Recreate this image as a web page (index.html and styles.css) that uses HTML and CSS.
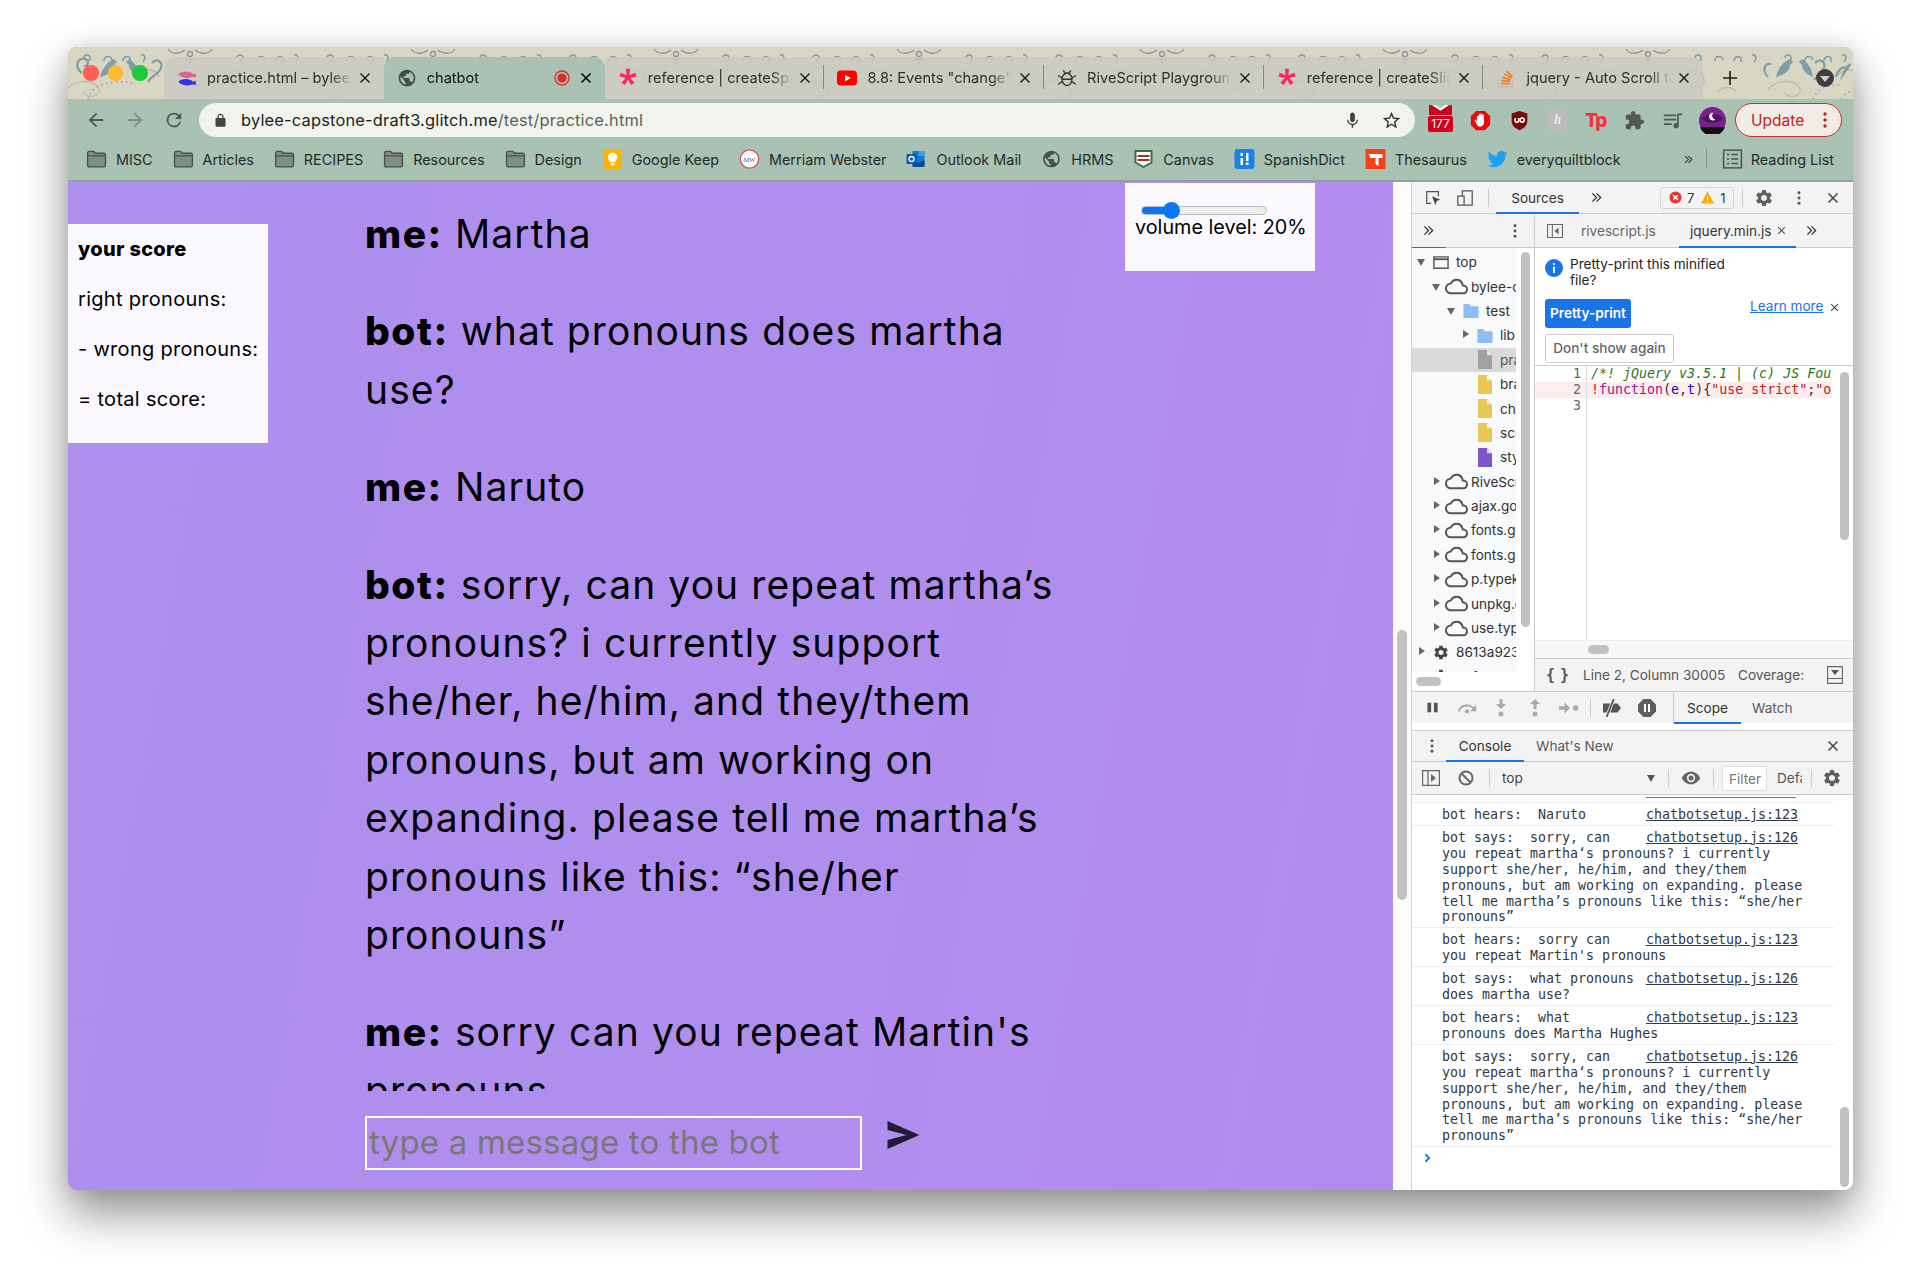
FILE: index.html
```html
<!DOCTYPE html>
<html lang="en">
<head>
<meta charset="utf-8">
<title>chatbot</title>
<link rel="stylesheet" href="styles.css">
</head>
<body>
<svg class="defs" width="0" height="0" aria-hidden="true">
  <defs>
    <symbol id="i-folder" viewBox="0 0 20 18"><path d="M1.5 3.5c0-1 .6-1.7 1.6-1.7h4.2l1.7 1.7h8c1 0 1.5.6 1.5 1.5v10c0 1-.6 1.5-1.5 1.5H3c-1 0-1.5-.6-1.5-1.5z" fill="#7f8f84" stroke="#4a4f4b" stroke-width="1.3"/><path d="M2 6h16" stroke="#4a4f4b" stroke-width="1.1"/></symbol>
    <symbol id="i-globe" viewBox="0 0 24 24"><path fill="currentColor" d="M12 2C6.48 2 2 6.48 2 12s4.48 10 10 10 10-4.48 10-10S17.52 2 12 2zm-1 17.93c-3.95-.49-7-3.85-7-7.93 0-.62.08-1.21.21-1.79L9 15v1c0 1.1.9 2 2 2v1.93zm6.9-2.54c-.26-.81-1-1.39-1.9-1.39h-1v-3c0-.55-.45-1-1-1H8v-2h2c.55 0 1-.45 1-1V7h2c1.1 0 2-.9 2-2v-.41c2.93 1.19 5 4.06 5 7.41 0 2.08-.8 3.97-2.1 5.39z"/></symbol>
    <symbol id="i-x" viewBox="0 0 12 12"><path d="M1.5 1.5l9 9M10.5 1.5l-9 9" fill="none" stroke="currentColor" stroke-width="1.5"/></symbol>
    <symbol id="i-star" viewBox="0 0 24 24"><path fill="#f7275f" d="M9.6 1h4.8l-.7 7.6 7-3 1.5 4.6-7.4 1.7 5 5.8-3.9 2.8L12 14l-3.9 6.5-3.9-2.8 5-5.8-7.4-1.7 1.5-4.6 7 3z"/></symbol>
    <symbol id="i-gear" viewBox="0 0 24 24"><path fill="currentColor" d="M19.14 12.94c.04-.3.06-.61.06-.94 0-.32-.02-.64-.07-.94l2.03-1.58a.49.49 0 0 0 .12-.61l-1.92-3.32a.488.488 0 0 0-.59-.22l-2.39.96c-.5-.38-1.03-.7-1.62-.94l-.36-2.54a.484.484 0 0 0-.48-.41h-3.84c-.24 0-.43.17-.47.41l-.36 2.54c-.59.24-1.13.57-1.62.94l-2.39-.96c-.22-.08-.47 0-.59.22L2.74 8.87c-.12.21-.08.47.12.61l2.03 1.58c-.05.3-.09.63-.09.94s.02.64.07.94l-2.03 1.58a.49.49 0 0 0-.12.61l1.92 3.32c.12.22.37.29.59.22l2.39-.96c.5.38 1.03.7 1.62.94l.36 2.54c.05.24.24.41.48.41h3.84c.24 0 .44-.17.47-.41l.36-2.54c.59-.24 1.13-.56 1.62-.94l2.39.96c.22.08.47 0 .59-.22l1.92-3.32c.12-.22.07-.47-.12-.61l-2.01-1.58zM12 15.6c-1.98 0-3.6-1.62-3.6-3.6s1.62-3.6 3.6-3.6 3.6 1.62 3.6 3.6-1.62 3.6-3.6 3.6z"/></symbol>
    <symbol id="i-cloud" viewBox="0 0 24 24"><path fill="#555" d="M19.35 10.04A7.49 7.49 0 0 0 12 4C9.11 4 6.6 5.64 5.35 8.04A5.994 5.994 0 0 0 0 14c0 3.31 2.69 6 6 6h13c2.76 0 5-2.24 5-5 0-2.64-2.05-4.78-4.65-4.96zM19 18H6c-2.21 0-4-1.79-4-4 0-2.05 1.53-3.76 3.56-3.97l1.07-.11.5-.95A5.469 5.469 0 0 1 12 6c2.62 0 4.88 1.86 5.39 4.43l.3 1.5 1.53.11A2.98 2.98 0 0 1 22 15c0 1.65-1.35 3-3 3z"/></symbol>
    <symbol id="i-dir" viewBox="0 0 18 18"><path fill="#8ebcf3" d="M1 2h6l2 2.5h8V17H1z"/></symbol>
    <symbol id="i-doc" viewBox="0 0 16 20" preserveAspectRatio="none"><path fill="currentColor" d="M1 1h9l5 5v13H1z"/><path fill="#fff" d="M10 1l5 5h-5z" opacity=".75"/></symbol>
    <symbol id="i-more" viewBox="0 0 4 16"><circle cx="2" cy="2" r="1.7" fill="currentColor"/><circle cx="2" cy="8" r="1.7" fill="currentColor"/><circle cx="2" cy="14" r="1.7" fill="currentColor"/></symbol>
    <symbol id="i-chev" viewBox="0 0 12 12"><path d="M1.5 1.5L6 6l-4.5 4.5M6 1.5L10.5 6 6 10.5" fill="none" stroke="#333" stroke-width="1.4"/></symbol>
  </defs>
</svg>

<div class="window">
  <header class="tabstrip">
    <svg class="wallpaper" width="1785" height="52" aria-hidden="true">
      <defs>
        <pattern id="wp" x="122" width="243" height="52" patternUnits="userSpaceOnUse">
          <g fill="none" stroke="#7e9aa6" stroke-width="1.5">
            <path d="M47 11a3 3 0 1 1 3 3"/><path d="M67 14a4 4 0 0 1 8-1"/><path d="M86 14a4 4 0 0 1 7-3v4"/><path d="M104 8a3 3 0 0 1 4 3l-2 4"/><path d="M137 11a3 3 0 1 1 3 3"/><path d="M157 14a4 4 0 0 1 8-1"/><path d="M176 14a4 4 0 0 1 7-3v4"/><path d="M194 8a3 3 0 0 1 4 3l-2 4"/>
          </g>
          <g fill="none" stroke="#9a8ea6" stroke-width="1.3">
            <circle cx="0" cy="7" r="2.5"/><circle cx="243" cy="7" r="2.5"/><path d="M-22 2c4 6 12 5 17 1M22 2c-4 6-12 5-17 1M221 2c4 6 12 5 17 1"/><path d="M-5 12h10M0 10v7M238 12h10M243 10v7"/>
          </g>
          <g fill="none" stroke="#b3b2a2" stroke-width="1.3" opacity=".8">
            <path d="M30 30c10-10 24-8 26 2s-12 12-14 4"/><path d="M120 42c12-12 30-8 32 0s-12 10-16 3"/><path d="M190 28c8-8 20-6 22 2"/><path d="M70 45c5-6 14-6 18 0"/>
          </g>
        </pattern>
      </defs>
      <rect width="1785" height="52" fill="#d9d7c3"/>
      <rect width="1785" height="52" fill="url(#wp)"/>
      <g fill="none" stroke="#7f9ea8" stroke-width="2.2">
        <path d="M14 26c-8-6-5-16 3-14 5 2 3 8-1 7"/><path d="M84 16c6-6 12 0 8 7-3 5-9 6-12 12"/>
        <path d="M1700 30c-6-6-4-14 3-13"/><path d="M1747 16c6-6 12 0 8 7-3 5-6 6-9 10"/><path d="M1768 30c2-8 8-12 12-8"/>
      </g>
      <g fill="#7f9ea8">
        <path d="M32 30c2-9 8-16 14-18l3 3-3 3c0 6-6 10-14 12z"/><path d="M72 30c-1-8-5-15-11-18l-3 3 3 3c0 5 4 9 11 12z"/>
        <path d="M1708 30c2-9 8-16 14-18l3 3-3 3c0 6-6 10-14 12z"/><path d="M1745 30c-1-8-5-15-11-18l-3 3 3 3c0 5 4 9 11 12z"/><path d="M1772 34c2-9 6-16 10-18l1 2"/>
      </g>
      <g fill="none" stroke="#8fa9ae" stroke-width="1.7" stroke-dasharray="1.5 3.5">
        <path d="M20 52c4-14 22-20 44-16"/><path d="M1745 52c4-10 14-14 26-14"/><path d="M1773 52c4-6 8-8 12-8"/>
      </g>
    </svg>
    <div class="lights"><i class="light red"></i><i class="light amber"></i><i class="light green"></i></div>
    <div class="tabs">
      <div class="tab">
        <svg class="fav fav-lg" viewBox="0 0 16 16"><path fill="#e0609a" d="M1 5c3-3 9-3 12 0l2-1v4l-2-1c-3 1.5-9 1.5-12-2z"/><path fill="#3333ee" d="M1 11c3-3 9-3 12 0l2-1v4l-2-1c-3 1.5-9 1.5-12-2z"/></svg>
        <span class="tab-title">practice.html – bylee-capstone</span>
        <svg class="tab-x"><use href="#i-x"/></svg>
      </div>
      <div class="tab active">
        <svg class="fav fav-dark fav-lg"><use href="#i-globe"/></svg>
        <span class="tab-title">chatbot</span>
        <svg class="rec" viewBox="0 0 16 16"><circle cx="8" cy="8" r="7" fill="none" stroke="#d93025" stroke-width="1.3"/><circle cx="8" cy="8" r="4.6" fill="#d93025"/></svg>
        <svg class="tab-x"><use href="#i-x"/></svg>
      </div>
      <div class="tab sep">
        <svg class="fav fav-lg"><use href="#i-star"/></svg>
        <span class="tab-title">reference | createSpan</span>
        <svg class="tab-x"><use href="#i-x"/></svg>
      </div>
      <div class="tab sep">
        <svg class="fav fav-lg" viewBox="0 0 16 16"><rect y="2" width="16" height="12" rx="3" fill="#f00"/><path d="M6.5 5.5v5L11 8z" fill="#fff"/></svg>
        <span class="tab-title">8.8: Events "change" and</span>
        <svg class="tab-x"><use href="#i-x"/></svg>
      </div>
      <div class="tab sep">
        <svg class="fav fav-lg" viewBox="0 0 16 16"><g fill="none" stroke="#333" stroke-width="1.1"><ellipse cx="8" cy="9" rx="4" ry="5"/><path d="M5 2l2 3M11 2L9 5M1 6l3 2M15 6l-3 2M1 13l3-2M15 13l-3-2M4 9h8"/></g></svg>
        <span class="tab-title">RiveScript Playground</span>
        <svg class="tab-x"><use href="#i-x"/></svg>
      </div>
      <div class="tab sep">
        <svg class="fav fav-lg"><use href="#i-star"/></svg>
        <span class="tab-title">reference | createSlider</span>
        <svg class="tab-x"><use href="#i-x"/></svg>
      </div>
      <div class="tab">
        <svg class="fav fav-lg" viewBox="0 0 16 16"><path fill="none" stroke="#bbb" stroke-width="1.3" d="M2 10v5h11v-5"/><path fill="none" stroke="#f48024" stroke-width="1.5" d="M4 12.5h7M4.3 10l7 .7M5 7.500l6.800 1.800M6.500 4.800l6 3.200M8.500 2.500l4.500 4.500"/></svg>
        <span class="tab-title">jquery - Auto Scroll to bottom</span>
        <svg class="tab-x"><use href="#i-x"/></svg>
      </div>
    </div>
    <svg class="newtab" viewBox="0 0 16 16"><path d="M8 1v14M1 8h14" stroke="#222" stroke-width="1.7"/></svg>
    <span class="tabmenu"><i class="tabmenu-arrow"></i></span>
  </header>

  <div class="toolbar">
    <svg class="nav-ico" viewBox="0 0 24 24"><path fill="#4f5a54" d="M20 11H7.830l5.590-5.590L12 4l-8 8 8 8 1.410-1.410L7.830 13H20v-2z"/></svg>
    <svg class="nav-ico" viewBox="0 0 24 24"><path fill="#7f8f85" d="M4 11h12.170l-5.590-5.590L12 4l8 8-8 8-1.410-1.410L16.170 13H4v-2z"/></svg>
    <svg class="nav-ico" viewBox="0 0 24 24"><path fill="#4f5a54" d="M17.650 6.350A7.960 7.960 0 0 0 12 4a8 8 0 1 0 7.750 10h-2.080A6 6 0 1 1 12 6c1.660 0 3.140.690 4.220 1.780L13 11h7V4l-2.350 2.350z"/></svg>
    <div class="omnibox">
      <svg class="omni-lock" viewBox="0 0 24 24"><path fill="#444" d="M18 8h-1V6c0-2.760-2.240-5-5-5S7 3.240 7 6v2H6c-1.100 0-2 .900-2 2v10c0 1.100.900 2 2 2h12c1.100 0 2-.900 2-2V10c0-1.100-.900-2-2-2zM9 6c0-1.660 1.340-3 3-3s3 1.340 3 3v2H9V6z"/></svg>
      <span class="url">bylee-capstone-draft3.glitch.me<span class="url-path">/test/practice.html</span></span>
      <svg class="omni-ico" viewBox="0 0 24 24"><path fill="#444" d="M12 14c1.660 0 3-1.340 3-3V5c0-1.660-1.340-3-3-3S9 3.340 9 5v6c0 1.660 1.340 3 3 3zm5.300-3c0 3-2.540 5.100-5.300 5.100S6.700 14 6.700 11H5c0 3.410 2.720 6.230 6 6.720V21h2v-3.280c3.280-.480 6-3.300 6-6.720h-1.700z"/></svg>
      <svg class="omni-ico star" viewBox="0 0 24 24"><path fill="#333" d="M22 9.240l-7.190-.620L12 2 9.190 8.630 2 9.240l5.460 4.730L5.820 21 12 17.270 18.180 21l-1.630-7.030L22 9.240zM12 15.400l-3.760 2.270 1-4.280-3.320-2.880 4.380-.380L12 6.100l1.710 4.040 4.380.380-3.320 2.880 1 4.280L12 15.400z"/></svg>
    </div>
    <div class="exts">
      <div class="ext ext-mail">
        <svg class="mail-m" viewBox="0 0 24 14" preserveAspectRatio="none"><path fill="#d0021b" d="M0 0h6l6 6 6-6h6v14H0z"/><path fill="#fff" d="M3 0l9 8 9-8h-4l-5 4.500L7 0z"/></svg>
        <span class="mail-count">177</span>
      </div>
      <svg class="ext" viewBox="0 0 24 24"><path fill="#ea0a0a" d="M7 1h10l6 6v10l-6 6H7l-6-6V7z"/><path fill="#fff" d="M8 12V7.500a1 1 0 0 1 2 0V5.500a1 1 0 0 1 2 0v-.500a1 1 0 0 1 2 0v1a1 1 0 0 1 2 0v8c0 3-2 5-4.500 5-2 0-3-1-4-3l-2-3.500c-.500-1 1-2 2-.500z"/></svg>
      <svg class="ext" viewBox="0 0 24 24"><path fill="#7a0a0a" d="M12 1l9 3v8c0 6-4 9-9 11-5-2-9-5-9-11V4z"/><path fill="none" stroke="#fff" stroke-width="1.800" d="M7 9v3a2 2 0 0 0 4 0V9"/><circle cx="15" cy="11.500" r="2.400" fill="none" stroke="#fff" stroke-width="1.800"/></svg>
      <span class="ext ext-h">h</span>
      <span class="ext ext-tp">Tp</span>
      <svg class="ext" viewBox="0 0 24 24"><path fill="#4f5a54" d="M20.500 11H19V7c0-1.100-.900-2-2-2h-4V3.500C13 2.120 11.880 1 10.500 1S8 2.120 8 3.500V5H4c-1.100 0-1.990.900-1.990 2v3.800H3.500c1.490 0 2.700 1.210 2.700 2.700s-1.210 2.700-2.700 2.700H2V20c0 1.100.900 2 2 2h3.800v-1.500c0-1.490 1.210-2.700 2.700-2.700 1.490 0 2.700 1.210 2.700 2.700V22H17c1.100 0 2-.900 2-2v-4h1.500c1.380 0 2.500-1.120 2.500-2.500S21.880 11 20.500 11z"/></svg>
      <svg class="ext" viewBox="0 0 24 24"><path fill="#4f5a54" d="M1 5h14v2H1zM1 10h14v2H1zM1 15h9v2H1zM16 4h6v2h-4v12a3 3 0 1 1-2-2.800z"/></svg>
      <svg class="ext ext-avatar" viewBox="0 0 28 28"><circle cx="14" cy="14" r="14" fill="#7b1f8f"/><path d="M1 21h26a14 14 0 0 1-26 0z" fill="#111"/><path d="M3 12c5-6 17-6 22 0-5 6-17 6-22 0z" fill="#4a1260"/><path d="M15 6a4 4 0 1 0 2 7 4 4 0 0 1-2-7z" fill="#fff"/></svg>
      <div class="update"><span>Update</span><svg class="update-more"><use href="#i-more"/></svg></div>
    </div>
  </div>

  <nav class="bookmarks">
    <a class="bm"><svg class="bm-ico"><use href="#i-folder"/></svg>MISC</a>
    <a class="bm"><svg class="bm-ico"><use href="#i-folder"/></svg>Articles</a>
    <a class="bm"><svg class="bm-ico"><use href="#i-folder"/></svg>RECIPES</a>
    <a class="bm"><svg class="bm-ico"><use href="#i-folder"/></svg>Resources</a>
    <a class="bm"><svg class="bm-ico"><use href="#i-folder"/></svg>Design</a>
    <a class="bm"><svg class="bm-ico" viewBox="0 0 18 20"><rect width="18" height="20" rx="3" fill="#fbb400"/><circle cx="9" cy="8.500" r="4.800" fill="#fff"/><rect x="7" y="14" width="4" height="2.500" fill="#fff"/></svg>Google Keep</a>
    <a class="bm"><svg class="bm-ico" viewBox="0 0 20 20"><circle cx="10" cy="10" r="9.200" fill="#fff" stroke="#d4504f" stroke-width="1.300"/><text x="10" y="12.500" class="mw">MW</text></svg>Merriam Webster</a>
    <a class="bm"><svg class="bm-ico" viewBox="0 0 20 20"><path fill="#0f78d4" d="M6 2h12v14H6z"/><path fill="#28a8ea" d="M12 2h6v5h-6z"/><path fill="#064a8c" d="M6 11l6 3 6-3v7H6z"/><rect y="5" width="10" height="10" rx="1" fill="#0a5ea8"/><circle cx="5" cy="10" r="2.500" fill="none" stroke="#fff" stroke-width="1.300"/></svg>Outlook Mail</a>
    <a class="bm"><svg class="bm-ico bm-globe"><use href="#i-globe"/></svg>HRMS</a>
    <a class="bm"><svg class="bm-ico" viewBox="0 0 20 20"><path fill="#3d6b4e" d="M1 1h18v13l-9 5-9-5z"/><path fill="#fff" d="M3 3h14v10l-7 4-7-4z"/><path fill="#a32e2e" d="M4 6h12v2H4zM4 10h12v2H4z"/></svg>Canvas</a>
    <a class="bm"><svg class="bm-ico" viewBox="0 0 20 20"><rect width="20" height="20" rx="3" fill="#1a82e2"/><path d="M6 9h2.500v7H6zM11.500 4H14v8h-2.500z" fill="#fff"/><rect x="6" y="4" width="2.500" height="3" fill="#fff"/><rect x="11.500" y="13.500" width="2.500" height="2.500" fill="#fff"/></svg>SpanishDict</a>
    <a class="bm"><svg class="bm-ico" viewBox="0 0 20 20"><rect width="20" height="20" fill="#f4421c"/><path fill="#fff" d="M3 5h14v4h-4v8l-3-2V9H5z"/></svg>Thesaurus</a>
    <a class="bm"><svg class="bm-ico" viewBox="0 0 24 24"><path fill="#1da1f2" d="M23.950 4.570a10 10 0 0 1-2.820.770 4.960 4.960 0 0 0 2.160-2.720c-.950.550-2 .960-3.120 1.190a4.920 4.920 0 0 0-8.380 4.480C7.690 8.100 4.070 6.130 1.640 3.160a4.820 4.820 0 0 0-.670 2.480c0 1.700.870 3.200 2.190 4.100a4.900 4.900 0 0 1-2.230-.620v.060a4.920 4.920 0 0 0 3.950 4.830 4.900 4.900 0 0 1-2.210.080 4.940 4.940 0 0 0 4.600 3.420A9.870 9.870 0 0 1 0 19.540a13.940 13.940 0 0 0 7.550 2.210c9.050 0 14-7.500 14-13.990 0-.210 0-.420-.010-.630a9.940 9.940 0 0 0 2.410-2.560z"/></svg>everyquiltblock</a>
    <span class="bm-spacer"></span>
    <svg class="bm-more"><use href="#i-chev"/></svg>
    <span class="bm-div"></span>
    <a class="bm bm-read"><svg class="bm-ico" viewBox="0 0 18 18"><rect x="1" y="1" width="16" height="16" fill="none" stroke="#4a4f4b" stroke-width="1.300"/><path d="M4 5h2M8 5h6M4 9h2M8 9h6M4 13h2M8 13h6" stroke="#4a4f4b" stroke-width="1.300"/></svg>Reading List</a>
  </nav>

  <div class="content">
    <main class="page">
      <aside class="score">
        <p class="score-title">your score</p>
        <p>right pronouns:</p>
        <p>- wrong pronouns:</p>
        <p>= total score:</p>
      </aside>
      <aside class="volume">
        <input class="vol-range" type="range" min="0" max="100" value="20">
        <div class="vol-label">volume level: 20%</div>
      </aside>
      <div class="chat-col">
        <section class="chat">
          <p><b>me:</b> Martha</p>
          <p><b>bot:</b> what pronouns does martha<br>use?</p>
          <p><b>me:</b> Naruto</p>
          <p><b>bot:</b> sorry, can you repeat martha’s<br>pronouns? i currently support<br>she/her, he/him, and they/them<br>pronouns, but am working on<br>expanding. please tell me martha’s<br>pronouns like this: “she/her<br>pronouns”</p>
          <p><b>me:</b> sorry can you repeat Martin's<br>pronouns</p>
        </section>
        <form class="composer">
          <input class="msg-input" type="text" placeholder="type a message to the bot">
          <svg class="send" viewBox="0 0 32 28"><path fill="#231a3a" d="M0 0l32 14L0 28l0-9 19-5L0 9z"/></svg>
        </form>
      </div>
    </main>

    <div class="gutter"><div class="gutter-thumb"></div></div>

    <aside class="devtools">
      <div class="dt-top">
        <svg class="dt-ic" viewBox="0 0 20 20"><path fill="none" stroke="#555" stroke-width="1.400" d="M8 16H3V3h13v5"/><path fill="#444" d="M9 8l9 4-4 1.300L12.700 18z"/></svg>
        <svg class="dt-ic" viewBox="0 0 20 20"><path fill="none" stroke="#555" stroke-width="1.400" d="M7 8V2h11v16H7M2 8h7v10H2z"/></svg>
        <span class="dt-sep"></span>
        <span class="dt-tab dt-tab-on dt-tab-sources">Sources</span>
        <svg class="dt-chev"><use href="#i-chev"/></svg>
        <span class="issues">
          <svg class="iss-ic" viewBox="0 0 14 14"><circle cx="7" cy="7" r="6.500" fill="#e8372c"/><path d="M4.500 4.500l5 5M9.500 4.500l-5 5" stroke="#fff" stroke-width="1.500"/></svg>7
          <svg class="iss-ic iss-warn" viewBox="0 0 14 14"><path fill="#f5ab00" d="M7 .5l7 13H0z"/><path d="M7 5v5M7 11v1.300" stroke="#fff" stroke-width="1.300"/></svg>1
        </span>
        <span class="dt-sep"></span>
        <svg class="dt-gear"><use href="#i-gear"/></svg>
        <svg class="dt-more"><use href="#i-more"/></svg>
        <svg class="dt-x"><use href="#i-x"/></svg>
      </div>

      <div class="sources">
        <div class="nav-pane">
          <div class="nav-head"><span class="nav-head-tab"><svg class="dt-chev"><use href="#i-chev"/></svg></span><svg class="dt-more"><use href="#i-more"/></svg></div>
          <div class="tree">
            <div class="row l0"><i class="arr down"></i><svg class="ri" viewBox="0 0 18 18"><path fill="none" stroke="#555" stroke-width="1.500" d="M1.500 3h15v12h-15z"/><path d="M1.500 5.500h15" stroke="#555" stroke-width="2"/></svg><span>top</span></div>
            <div class="row l1"><i class="arr down"></i><svg class="ri ri-cloud"><use href="#i-cloud"/></svg><span>bylee-capstone</span></div>
            <div class="row l2"><i class="arr down"></i><svg class="ri"><use href="#i-dir"/></svg><span>test</span></div>
            <div class="row l3"><i class="arr right"></i><svg class="ri"><use href="#i-dir"/></svg><span>lib</span></div>
            <div class="row l3 sel"><i class="arr none"></i><svg class="ri ri-doc doc-grey"><use href="#i-doc"/></svg><span>practice.html</span></div>
            <div class="row l3"><i class="arr none"></i><svg class="ri ri-doc doc-yel"><use href="#i-doc"/></svg><span>brain.js</span></div>
            <div class="row l3"><i class="arr none"></i><svg class="ri ri-doc doc-yel"><use href="#i-doc"/></svg><span>chatbot.js</span></div>
            <div class="row l3"><i class="arr none"></i><svg class="ri ri-doc doc-yel"><use href="#i-doc"/></svg><span>script.js</span></div>
            <div class="row l3"><i class="arr none"></i><svg class="ri ri-doc doc-pur"><use href="#i-doc"/></svg><span>style.css</span></div>
            <div class="row l1"><i class="arr right"></i><svg class="ri ri-cloud"><use href="#i-cloud"/></svg><span>RiveScript</span></div>
            <div class="row l1"><i class="arr right"></i><svg class="ri ri-cloud"><use href="#i-cloud"/></svg><span>ajax.googleapis</span></div>
            <div class="row l1"><i class="arr right"></i><svg class="ri ri-cloud"><use href="#i-cloud"/></svg><span>fonts.googleapis</span></div>
            <div class="row l1"><i class="arr right"></i><svg class="ri ri-cloud"><use href="#i-cloud"/></svg><span>fonts.gstatic</span></div>
            <div class="row l1"><i class="arr right"></i><svg class="ri ri-cloud"><use href="#i-cloud"/></svg><span>p.typekit</span></div>
            <div class="row l1"><i class="arr right"></i><svg class="ri ri-cloud"><use href="#i-cloud"/></svg><span>unpkg.com</span></div>
            <div class="row l1"><i class="arr right"></i><svg class="ri ri-cloud"><use href="#i-cloud"/></svg><span>use.typekit</span></div>
            <div class="row l0"><i class="arr right"></i><svg class="ri ri-gears" viewBox="0 0 24 24"><use href="#i-gear"/></svg><span>8613a923</span></div>
            <div class="row l0"><i class="arr right"></i><svg class="ri ri-gears" viewBox="0 0 24 24"><use href="#i-gear"/></svg><span>befcba42</span></div>
          </div>
          <div class="nav-hscroll"><i class="hthumb nav-hthumb"></i></div>
        </div>

        <div class="ed-pane">
          <div class="ed-tabs">
            <svg class="ed-toggle" viewBox="0 0 18 18"><path fill="none" stroke="#666" stroke-width="1.200" d="M.6 1.600h16.800v14.800H.6zM6 1.600v14.800"/><path fill="#666" d="M13 5v8L8.500 9z"/></svg>
            <span class="ed-tab">rivescript.js</span>
            <span class="ed-tab ed-tab-on">jquery.min.js<svg class="ed-x"><use href="#i-x"/></svg></span>
            <svg class="dt-chev"><use href="#i-chev"/></svg>
          </div>
          <div class="infobar">
            <div class="info-top">
              <svg class="info-ic" viewBox="0 0 18 18"><circle cx="9" cy="9" r="9" fill="#1a73e8"/><path d="M9 7.500V14M9 4v2" stroke="#fff" stroke-width="1.800"/></svg>
              <span class="info-text">Pretty-print this minified<br>file?</span>
            </div>
            <div class="info-actions">
              <span class="btn-blue">Pretty-print</span>
              <a class="learn">Learn more</a>
              <svg class="info-x"><use href="#i-x"/></svg>
            </div>
            <span class="btn-plain">Don't show again</span>
          </div>
          <div class="code">
            <div class="code-line"><span class="ln">1</span><code class="cm">/*! jQuery v3.5.1 | (c) JS Foundation</code></div>
            <div class="code-line err"><span class="ln">2</span><code><span class="op">!</span><span class="kw">function</span>(<span class="vr">e</span>,<span class="vr">t</span>){<span class="st">"use strict"</span>;<span class="st">"object"</span></code></div>
            <div class="code-line"><span class="ln">3</span><code></code></div>
            <div class="code-fill"><span class="ln-col"></span></div>
            <div class="code-thumb"></div>
          </div>
          <div class="ed-hscroll"><i class="hthumb ed-hthumb"></i></div>
          <div class="statusbar">
            <span class="braces">{ }</span>
            <span class="st-pos">Line 2, Column 30005</span>
            <span class="st-cov">Coverage:</span>
            <svg class="st-ic" viewBox="0 0 16 18"><path fill="none" stroke="#666" stroke-width="1.100" d="M.6.600h14.800v16.800H.6zM.6 12.500h14.800"/><path fill="#555" d="M4 4h8L8 9z"/></svg>
          </div>
        </div>
      </div>

      <div class="debug">
        <div class="debug-btns">
          <svg class="dbg dbg-sm" viewBox="0 0 14 14"><path fill="#555" d="M1 2h4v10H1zM8 2h4v10H8z"/></svg>
          <svg class="dbg" viewBox="0 0 24 14"><path fill="none" stroke="#aaa" stroke-width="2.400" d="M2 11c3-9 15-9 19-2"/><path fill="#aaa" d="M23 3v8h-7z"/><circle cx="12" cy="11" r="2.500" fill="#aaa"/></svg>
          <svg class="dbg" viewBox="0 0 14 18"><path fill="#aaa" d="M5.500 0h3v5H12l-5 5-5-5h3.500z"/><circle cx="7" cy="15" r="2.500" fill="#aaa"/></svg>
          <svg class="dbg" viewBox="0 0 14 18"><path fill="#aaa" d="M5.500 10h3V5H12L7 0 2 5h3.500z"/><circle cx="7" cy="15" r="2.500" fill="#aaa"/></svg>
          <svg class="dbg" viewBox="0 0 18 14"><path fill="#aaa" d="M0 5.500h5V2l5 5-5 5V8.500H0z"/><circle cx="15" cy="7" r="2.500" fill="#aaa"/></svg>
          <span class="dt-sep"></span>
          <svg class="dbg dbg-big" viewBox="0 0 22 20"><path fill="#555" d="M1 5h8L5 15H1zM13 5h4l4 5-4 5h-8z"/><path d="M13 0L5 20" stroke="#555" stroke-width="2"/></svg>
          <svg class="dbg dbg-big" viewBox="0 0 18 18"><path fill="#5f5f5f" d="M5.500 0h7L18 5.500v7L12.500 18h-7L0 12.500v-7z"/><path fill="#fff" d="M6 5h2v8H6zM10 5h2v8h-2z"/></svg>
        </div>
        <div class="debug-tabs"><span class="dt-tab dt-tab-on scope-tab">Scope</span><span class="dt-tab watch-tab">Watch</span></div>
      </div>
      <div class="strip"></div>

      <div class="drawer-head">
        <svg class="dt-more"><use href="#i-more"/></svg>
        <span class="dt-tab dt-tab-on console-tab">Console</span>
        <span class="dt-tab new-tab">What's New</span>
        <svg class="dt-x"><use href="#i-x"/></svg>
      </div>
      <div class="console-bar">
        <svg class="cb-ic" viewBox="0 0 18 16"><path fill="none" stroke="#666" stroke-width="1.200" d="M.6.600h16.800v14.800H.6zM6 .6v14.800"/><path fill="#666" d="M9 4v8l5-4z"/></svg>
        <svg class="cb-ic cb-block" viewBox="0 0 16 16"><circle cx="8" cy="8" r="6.500" fill="none" stroke="#666" stroke-width="2"/><path d="M3.500 3.500l9 9" stroke="#666" stroke-width="2"/></svg>
        <span class="dt-sep"></span>
        <span class="cb-ctx">top</span>
        <i class="cb-caret"></i>
        <span class="dt-sep"></span>
        <svg class="cb-eye" viewBox="0 0 24 24"><path fill="#666" d="M12 4.500C7 4.500 2.730 7.610 1 12c1.730 4.390 6 7.500 11 7.500s9.270-3.110 11-7.500c-1.730-4.390-6-7.500-11-7.500zM12 17a5 5 0 1 1 0-10 5 5 0 0 1 0 10zm0-8a3 3 0 1 0 0 6 3 3 0 0 0 0-6z"/></svg>
        <span class="dt-sep"></span>
        <span class="cb-filter">Filter</span>
        <span class="cb-def">Defa</span>
        <span class="dt-sep"></span>
        <svg class="dt-gear"><use href="#i-gear"/></svg>
      </div>
      <div class="console">
        <div class="msg msg-cut"></div>
        <div class="msg"><a class="src">chatbotsetup.js:123</a>bot hears:  Naruto</div>
        <div class="msg"><a class="src">chatbotsetup.js:126</a>bot says:  sorry, can
you repeat martha‘s pronouns? i currently
support she/her, he/him, and they/them
pronouns, but am working on expanding. please
tell me martha’s pronouns like this: “she/her
pronouns”</div>
        <div class="msg"><a class="src">chatbotsetup.js:123</a>bot hears:  sorry can
you repeat Martin's pronouns</div>
        <div class="msg"><a class="src">chatbotsetup.js:126</a>bot says:  what pronouns
does martha use?</div>
        <div class="msg"><a class="src">chatbotsetup.js:123</a>bot hears:  what
pronouns does Martha Hughes</div>
        <div class="msg"><a class="src">chatbotsetup.js:126</a>bot says:  sorry, can
you repeat martha‘s pronouns? i currently
support she/her, he/him, and they/them
pronouns, but am working on expanding. please
tell me martha’s pronouns like this: “she/her
pronouns”</div>
        <div class="prompt"><svg class="prompt-ic" viewBox="0 0 8 12"><path d="M1.500 1.500L6 6l-4.500 4.500" fill="none" stroke="#1a73e8" stroke-width="2.200"/></svg></div>
        <div class="console-thumb"></div>
      </div>
    </aside>
  </div>
</div>
</body>
</html>
```
FILE: styles.css
```css
* { box-sizing: border-box; }
html, body { margin: 0; height: 100%; }
body {
  background: #fff;
  padding: 47px 67px 0 68px;
  font-family: Inter, "Liberation Sans", sans-serif;
  overflow: hidden;
}
.defs { position: absolute; }

.window {
  width: 1785px;
  height: 1143px;
  border-radius: 9px;
  overflow: hidden;
  display: flex;
  flex-direction: column;
  box-shadow: 0 24px 46px rgba(0,0,0,.42), 0 0 22px rgba(0,0,0,.12);
  background: #aac2b3;
}

/* tab strip */
.tabstrip {
  height: 52px;
  position: relative;
  display: flex;
  align-items: flex-end;
  padding-left: 96px;
  flex: none;
}
.wallpaper { position: absolute; left: 0; top: 0; }
.lights { position: absolute; left: 15px; top: 18px; display: flex; gap: 9px; }
.light { width: 15.5px; height: 15.5px; border-radius: 50%; }
.red { background: #ff5f57; }
.amber { background: #fdbb2d; }
.green { background: #1fc93c; }
.tabs { display: flex; position: relative; height: 42px; }
.tab {
  width: 219.7px;
  height: 42px;
  display: flex;
  align-items: center;
  padding: 0 11px 0 15px;
  position: relative;
  background: rgba(201,201,194,.82);
  font-size: 14.6px;
  color: #2b2f2c;
}
.tab:first-child { border-radius: 11px 0 0 0; }
.tab:last-child { border-radius: 0 11px 0 0; }
.tab.active { background: #aac2b3; border-radius: 11px 11px 0 0; color: #111; width: 221px; }
.tab.sep::after {
  content: "";
  position: absolute;
  right: 0;
  top: 8px;
  height: 24px;
  width: 1px;
  background: #85867f;
}
.fav { width: 16px; height: 16px; flex: none; margin-right: 12px; }
.fav-lg { width: 20px; height: 20px; margin: 0 10px 0 -2px; }
.fav-dark { color: #434a47; }
.tab-title {
  flex: 1;
  min-width: 0;
  white-space: nowrap;
  overflow: hidden;
  -webkit-mask-image: linear-gradient(90deg, #000 85%, transparent);
  mask-image: linear-gradient(90deg, #000 85%, transparent);
}
.rec { width: 16px; height: 16px; margin-right: 10px; flex: none; }
.tab-x { width: 12px; height: 12px; flex: none; margin: 0 2px 0 7px; color: #222; }
.tab.active .tab-x { margin-left: 0; color: #000; }
.newtab { position: relative; width: 16px; height: 16px; margin: 0 0 13px 19px; flex: none; }
.tabmenu {
  position: absolute;
  left: 1748px;
  top: 22px;
  width: 18px;
  height: 18px;
  border-radius: 50%;
  background: #3c3f3c;
  display: flex;
  align-items: center;
  justify-content: center;
}
.tabmenu-arrow {
  width: 0; height: 0;
  border-left: 5px solid transparent;
  border-right: 5px solid transparent;
  border-top: 6px solid #d0d0c6;
  margin-top: 1px;
}

/* toolbar */
.toolbar {
  height: 41px;
  flex: none;
  background: #aac2b3;
  display: flex;
  align-items: flex-start;
  padding: 4px 11px 0 17px;
}
.nav-ico { width: 22px; height: 22px; margin: 6px 17px 0 0; flex: none; }
.omnibox {
  width: 1216px;
  height: 34px;
  margin-left: -3px;
  border-radius: 17px;
  background: #f1f4ec;
  display: flex;
  align-items: center;
  padding: 0 10px 0 14px;
  flex: none;
}
.omni-lock { width: 15px; height: 15px; flex: none; margin-right: 13px; }
.url { flex: 1; font-size: 16.4px; letter-spacing: .2px; color: #1c1f1d; white-space: nowrap; }
.url-path { color: #5a615c; }
.omni-ico { width: 19px; height: 19px; margin-right: 19px; }
.omni-ico.star { margin-right: 3px; width: 21px; height: 21px; }
.exts { display: flex; align-items: center; height: 34px; flex: 1; min-width: 0; }
.ext { width: 21px; height: 21px; flex: none; margin-right: 18px; }
.ext:first-child { margin-left: 13px; }
.ext-mail {
  width: 25px;
  height: 30px;
  display: flex;
  flex-direction: column;
  align-items: center;
  margin-right: 17px;
}
.mail-m { width: 23px; height: 10px; }
.mail-count {
  width: 25px;
  height: 16px;
  margin-top: 1px;
  background: #d0021b;
  color: #fff;
  font-size: 12px;
  line-height: 16px;
  text-align: center;
  border-radius: 2px;
}
.ext-h {
  background: #bdbcbc;
  color: #fff;
  border-radius: 3px;
  width: 19px;
  height: 20px;
  font: italic 14px/20px "Liberation Serif", serif;
  text-align: center;
}
.ext-tp { color: #f2333a; font-weight: 800; font-size: 19px; letter-spacing: -1.5px; width: 21px; line-height: 21px; }
.ext-avatar { width: 27px; height: 27px; margin: 0 0 0 -3px; }
.update {
  width: 107px;
  height: 34px;
  border-radius: 17px;
  border: 1.5px solid #c5332b;
  background: #f1ece5;
  color: #c5221f;
  font-size: 15.5px;
  display: flex;
  align-items: center;
  padding-left: 15px;
  justify-content: space-between;
  padding-right: 14px;
  flex: none;
  margin-left: auto;
}
.update-more { width: 4px; height: 16px; color: #c5221f; }

/* bookmarks */
.bookmarks {
  height: 42px;
  flex: none;
  display: flex;
  align-items: center;
  gap: 19.9px;
  padding: 0 18px 2px 18px;
  background: #aac2b3;
  border-bottom: 2px solid #8ea396;
  font-size: 14.4px;
  color: #262a27;
}
.bm { display: flex; align-items: center; white-space: nowrap; }
.bm-ico { width: 21px; height: 20px; margin-right: 9px; flex: none; }
.bm-globe { color: #4a504d; }
.mw { font-size: 6.5px; fill: #3a5a9a; text-anchor: middle; font-family: "Liberation Serif", serif; }
.bm-spacer { flex: 1; }
.bm-more { width: 9px; height: 9px; margin-right: -7px; }
.bm-div { width: 1px; height: 20px; background: #8c9a90; margin-right: -5px; }
.bm-read { margin-right: 1px; }
.bm-read .bm-ico { margin-right: 8px; }

/* content */
.content { flex: 1; min-height: 0; display: flex; }
.page {
  width: 1325px;
  flex: none;
  position: relative;
  background: linear-gradient(100deg, #ae8fed 0%, #b08eee 60%, #b48bec 100%);
  color: #000;
  font-family: Inter, sans-serif;
}
.score {
  position: absolute;
  left: 0;
  top: 42px;
  width: 200px;
  height: 219px;
  background: #fbf9ff;
  padding: 0 0 0 10px;
  font-size: 20px;
  line-height: 30px;
  letter-spacing: .3px;
}
.score p { margin: 0 0 20px; }
.score p:first-child { margin-top: 10px; }
.score-title { font-weight: 800; }
.volume {
  position: absolute;
  left: 1057px;
  top: 1px;
  width: 190px;
  height: 88px;
  background: #fbf9ff;
  padding: 15px 0 0 10px;
}
.vol-range {
  -webkit-appearance: none;
  appearance: none;
  display: block;
  margin: 8px 0 0 6px;
  width: 126px;
  height: 9px;
  border-radius: 5px;
  border: 1px solid #bbb;
  background: linear-gradient(90deg, #0a75f5 0 26%, #efefef 26%);
  outline: none;
}
.vol-range::-webkit-slider-thumb {
  -webkit-appearance: none;
  width: 17px;
  height: 17px;
  border-radius: 50%;
  background: #0a75f5;
  border: 0;
}
.vol-label { font-size: 19.8px; line-height: 24px; white-space: nowrap; }

.chat-col { margin-left: 297px; height: 100%; display: flex; flex-direction: column; }
.chat {
  height: 909px;
  overflow: hidden;
  padding-top: 23px;
  font-size: 39px;
  line-height: 58.4px;
  letter-spacing: 1.1px;
}
.chat p { margin: 0 0 39px; white-space: nowrap; }
.chat b { font-weight: 800; letter-spacing: 1.5px; }
.composer { display: flex; align-items: flex-start; margin-top: 25px; }
.msg-input {
  width: 497px;
  height: 54px;
  border: 2.5px solid #fff;
  background: transparent;
  padding: 0 0 3px 2px;
  font: 400 33px Inter, sans-serif;
  letter-spacing: .2px;
  outline: none;
}
.msg-input::placeholder { color: #7b7779; opacity: 1; }
.send { width: 33px; height: 28px; margin: 5px 0 0 25px; }

/* page scrollbar gutter */
.gutter { width: 19px; flex: none; position: relative; border-right: 1px solid #d3d3d3; background: #fcfcfc; }
.gutter-thumb {
  position: absolute;
  left: 4px;
  top: 448px;
  width: 10px;
  height: 270px;
  background: #c2c2c2;
  border-radius: 5px;
}

/* devtools */
.devtools {
  flex: 1;
  min-width: 0;
  display: flex;
  flex-direction: column;
  background: #fff;
  font-size: 13.6px;
  color: #333;
}
.dt-top {
  height: 32px;
  flex: none;
  display: flex;
  align-items: center;
  background: #f3f3f3;
  border-bottom: 1px solid #ccc;
  padding-left: 12px;
}
.dt-ic { width: 18px; height: 18px; margin-right: 14px; flex: none; }
.dt-sep { width: 1px; height: 18px; background: #ccc; flex: none; }
.dt-tab { position: relative; display: flex; align-items: center; height: 100%; color: #5a5a5a; white-space: nowrap; }
.dt-tab-on { color: #333; }
.dt-tab-on::after {
  content: "";
  position: absolute;
  left: 0;
  right: 0;
  bottom: -1px;
  height: 2px;
  background: #1a73e8;
}
.dt-tab-sources { width: 83px; justify-content: center; margin-left: 7px; }
.dt-chev { width: 11px; height: 11px; flex: none; margin-left: 12px; }
.issues {
  display: flex;
  align-items: center;
  margin-left: 58px;
  width: 74px;
  height: 22px;
  padding-left: 8px;
  border: 1px solid #d5d5d5;
  border-radius: 3px;
  font-size: 13px;
  margin-right: 8px;
}
.iss-ic { width: 13px; height: 13px; margin-right: 5px; }
.iss-warn { margin: 0 6px 0 7px; }
.dt-gear { width: 20px; height: 20px; color: #5f5f5f; flex: none; margin: 0 0 0 11px; }
.dt-more { width: 4px; height: 14px; color: #555; flex: none; }
.dt-top .dt-more { margin-left: 23px; }
.dt-x { width: 12px; height: 12px; color: #444; flex: none; margin-left: auto; margin-right: 14px; }

.sources { height: 477px; flex: none; display: flex; }
.nav-pane { width: 123px; flex: none; display: flex; flex-direction: column; border-right: 1px solid #ccc; background: #fff; position: relative; }
.nav-pane::after {
  content: "";
  position: absolute;
  right: 4px;
  top: 38px;
  width: 9px;
  height: 375px;
  border-radius: 5px;
  background: #c1c1c1;
}
.nav-head { height: 34px; flex: none; display: flex; align-items: center; background: #f3f3f3; border-bottom: 1px solid #ccc; position: relative; }
.nav-head-tab { width: 34px; height: 34px; display: flex; align-items: center; position: relative; }
.nav-head-tab::after { content: ""; position: absolute; left: 0; right: 0; bottom: -1px; height: 2px; background: #1a73e8; }
.nav-head-tab .dt-chev { margin-left: 11px; }
.nav-head .dt-more { margin-left: 67px; }
.tree { height: 424px; padding-top: 2px; overflow: hidden; position: relative; background: #f8f9fb; margin-right: 18px; }
.row {
  height: 24.4px;
  display: flex;
  align-items: center;
  white-space: nowrap;
  overflow: hidden;
}
.row span { margin-left: 6px; }
.l0 { padding-left: 5px; }
.l1 { padding-left: 20px; }
.l2 { padding-left: 35px; }
.l3 { padding-left: 49px; }
.sel { background: #dadada; color: #555; }
.arr { width: 10px; height: 10px; flex: none; margin-right: 5px; position: relative; }
.arr.down::before { content: ""; position: absolute; left: 0; top: 2px; border-left: 4.5px solid transparent; border-right: 4.5px solid transparent; border-top: 7px solid #666; }
.arr.right::before { content: ""; position: absolute; left: 2px; top: 0; border-top: 4.5px solid transparent; border-bottom: 4.5px solid transparent; border-left: 6px solid #666; }
.ri { width: 18px; height: 17px; flex: none; }
.ri-cloud { width: 23px; height: 23px; margin: 0 -3px 0 -2px; }
.ri-doc { width: 16px; height: 21px; margin: 0 1px; }
.doc-grey { color: #a1a1a1; }
.doc-yel { color: #e7c855; }
.doc-pur { color: #7f56c9; }
.ri-gears { color: #444; }
.nav-hscroll { height: 19px; flex: none; position: relative; background: #fff; }
.hthumb { position: absolute; background: #c1c1c1; border-radius: 5px; height: 9px; }
.nav-hthumb { left: 4px; top: 5px; width: 25px; }

.ed-pane { flex: 1; min-width: 0; display: flex; flex-direction: column; }
.ed-tabs { height: 34px; flex: none; display: flex; align-items: center; background: #f3f3f3; border-bottom: 1px solid #ccc; padding-left: 11px; color: #666; }
.ed-toggle { width: 18px; height: 16px; flex: none; }
.ed-tab { margin-left: 17px; width: 98px; white-space: nowrap; display: flex; align-items: center; height: 100%; position: relative; }
.ed-tab-on { color: #333; width: 117px; margin-left: 0; padding-left: 11px; }
.ed-tab-on::after { content: ""; position: absolute; left: 0; right: 0; bottom: -1px; height: 2px; background: #1a73e8; }
.ed-x { width: 9px; height: 9px; margin-left: 6px; color: #555; }
.ed-tabs > .dt-chev { margin-left: 10px; }

.infobar { height: 118px; flex: none; border-bottom: 1px solid #ccc; position: relative; padding: 8px 0 0 10px; background: #fff; color: #222; }
.info-top { display: flex; align-items: flex-start; height: 43px; line-height: 16px; }
.info-ic { width: 18px; height: 18px; flex: none; margin: 3px 7px 0 0; }
.info-actions { display: flex; align-items: flex-start; }
.btn-blue { width: 86px; height: 29px; background: #1a73e8; color: #fff; border-radius: 3px; font-weight: 600; font-size: 13.6px; line-height: 29px; text-align: center; }
.learn { color: #1a73e8; text-decoration: underline; margin: -1px 0 0 119px; font-size: 13.6px; white-space: nowrap; }
.info-x { width: 9px; height: 9px; color: #444; margin: 4px 0 0 7px; }
.btn-plain { display: block; width: 129px; height: 29px; margin-top: 6px; border: 1px solid #ccc; border-radius: 3px; color: #666; font-weight: 500; line-height: 27px; text-align: center; }

.code {
  height: 274px;
  flex: none;
  position: relative;
  font: 13.3px/16px "DejaVu Sans Mono", monospace;
  background: #fff;
  overflow: hidden;
  padding-right: 21px;
}
.code-line { height: 16px; display: flex; white-space: pre; overflow: hidden; }
.code-line.err { background: #fdeded; }
.ln { width: 52px; flex: none; padding-right: 5px; text-align: right; color: #666; border-right: 1px solid #ddd; background: inherit; }
.code-line code { font: inherit; padding-left: 4px; overflow: hidden; }
.code-fill { height: 226px; }
.ln-col { display: block; width: 52px; height: 100%; border-right: 1px solid #ddd; }
.code-line .cm { color: #1c7a1c; font-style: italic; }
.op, .st { color: #c41a16; }
.kw { color: #aa0d91; }
.vr { color: #1c00cf; }
.code-thumb { position: absolute; right: 4px; top: 6px; width: 9px; height: 168px; border-radius: 5px; background: #c1c1c1; }
.ed-hscroll { height: 18px; flex: none; position: relative; background: #f8f8f8; border-top: 1px solid #eee; }
.ed-hthumb { left: 53px; top: 4px; width: 21px; }
.statusbar { flex: 1; display: flex; align-items: center; background: #f3f3f3; border-top: 1px solid #ccc; position: relative; color: #555; }
.braces { font: 700 15px "DejaVu Sans Mono", monospace; margin-left: 11px; white-space: pre; width: 37px; letter-spacing: -2px; }
.st-pos { width: 155px; white-space: nowrap; }
.st-cov { width: 76px; white-space: nowrap; }
.st-ic { width: 16px; height: 18px; margin-left: 13px; }

.debug { height: 32px; flex: none; display: flex; background: #f3f3f3; border-top: 1px solid #ccc; }
.debug-btns { width: 262px; flex: none; display: flex; align-items: center; padding-left: 11px; border-right: 1px solid #ccc; }
.dbg { width: 20px; height: 18px; margin-right: 14px; flex: none; }
.dbg-sm { height: 13px; }
.debug-btns .dt-sep { margin: 0 11px 0 -3px; }
.dbg-big { margin-right: 15px; }
.debug-tabs { flex: 1; display: flex; }
.scope-tab { width: 67px; justify-content: center; }
.watch-tab { margin-left: 11px; }
.strip { height: 7px; flex: none; background: #fff; }
.drawer-head { height: 32px; flex: none; display: flex; align-items: center; background: #f3f3f3; border-top: 1px solid #ccc; border-bottom: 1px solid #ccc; padding-left: 18px; }
.console-tab { width: 78px; justify-content: center; margin-left: 12px; }
.new-tab { margin-left: 12px; }
.console-bar { height: 33px; flex: none; display: flex; align-items: center; background: #f3f3f3; border-bottom: 1px solid #ccc; padding-left: 10px; position: relative; }
.cb-ic { width: 18px; height: 16px; flex: none; }
.cb-block { margin-left: 17px; margin-right: 14px; }
.cb-ctx { margin: 0 0 0 12px; width: 145px; color: #444; }
.cb-caret { width: 0; height: 0; border-left: 4px solid transparent; border-right: 4px solid transparent; border-top: 7px solid #555; margin-right: 13px; }
.cb-eye { width: 20px; height: 20px; margin: 0 12px; flex: none; }
.cb-filter { margin-left: 8px; width: 45px; height: 25px; background: #fff; border: 1px solid #e0e0e0; color: #777; line-height: 25px; padding-left: 6px; flex: none; }
.cb-def { margin-left: 10px; width: 25px; overflow: hidden; white-space: nowrap; color: #555; flex: none; }
.cb-def + .dt-sep { margin-left: 9px; }
.console-bar .dt-gear { margin-left: 10px; }

.console {
  flex: 1;
  min-height: 0;
  position: relative;
  overflow: hidden;
  padding-right: 19px;
  font: 13.3px/15.9px "DejaVu Sans Mono", monospace;
  color: #303942;
  background: #fff;
}
.msg {
  padding: 4px 30px 2px 30px;
  border-bottom: 1px solid #ededed;
  white-space: pre;
}
.msg-cut { height: 7px; padding: 0; background: linear-gradient(#fff 0 2px, #777 2px 3px, #fff 3px); margin-left: 234px; margin-right: 38px; border-bottom: 0; }
.msg-cut + .msg { border-top: 1px solid #ededed; }
.src { float: right; color: #303942; text-decoration: underline; margin-right: 6px; }
.prompt { padding: 6px 0 0 12px; }
.prompt-ic { width: 7px; height: 10px; display: block; }
.console-thumb { position: absolute; right: 4px; top: 312px; width: 9px; height: 80px; border-radius: 5px; background: #c1c1c1; }
```
